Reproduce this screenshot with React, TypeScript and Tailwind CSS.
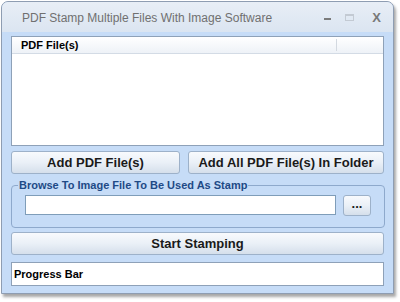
import { useState } from 'react';

const btn =
  'rounded-[3px] border border-[#9db1c9] bg-gradient-to-b from-[#f8fafd] via-[#eaf0f7] to-[#d5dfeb] text-[13px] font-bold text-[#1a1a1a] flex items-center justify-center';

export default function App() {
  const [imagePath, setImagePath] = useState('');

  return (
    <div className="w-[400px] h-[302px] bg-white pt-[1px] pl-[1px]" style={{ fontFamily: '"Liberation Sans", Arial, sans-serif' }}>
      <div className="w-[393px] h-[293px] rounded-t-[7px] border border-[#8e9db2] bg-[#c6dcf7] shadow-[2px_3px_3px_rgba(0,0,0,0.35)] flex flex-col overflow-hidden">
        {/* title bar */}
        <div className="h-[30px] shrink-0 flex items-center bg-gradient-to-b from-[#e8eef6] to-[#dbe5f1] pl-[20px] pr-[12px]">
          <span className="text-[12px] text-[#707070] flex-1 pt-[1px]">PDF Stamp Multiple Files With Image Software</span>
          <div className="flex items-center gap-[10px] text-[#7b7b7b]">
            <span className="w-[7px] h-[2px] bg-[#7b7b7b] mt-[4px]" />
            <span className="w-[9px] h-[7px] border border-[#c3cad3] border-t-2 ml-[4px]" />
            <span className="text-[13px] font-bold text-[#787878] ml-[8px] leading-none">X</span>
          </div>
        </div>

        {/* client area */}
        <div className="flex-1 flex flex-col px-[9px] pt-[4px]">
          <div className="h-[110px] bg-white border border-[#8ea1b8] flex flex-col">
            <div className="h-[17px] flex items-center bg-gradient-to-b from-white to-[#eef2f7] border-b border-[#d3dbe5]">
              <span className="text-[11px] font-bold text-black pl-[9px] w-[324px]">PDF File(s)</span>
              <span className="w-px h-[12px] bg-[#d3d9e0]" />
            </div>
          </div>

          <div className="flex gap-[8px] mt-[5px]">
            <button className={`${btn} w-[169px] h-[23px]`}>Add PDF File(s)</button>
            <button className={`${btn} flex-1 h-[23px]`}>Add All PDF File(s) In Folder</button>
          </div>

          <fieldset className="mt-[3px] h-[51px] border border-[#8ea9cc] rounded-[4px] px-[13px] pb-0 pt-0 flex items-start">
            <legend className="text-[11px] font-bold text-[#1e4a86] px-[1px] ml-[-7px]">
              Browse To Image File To Be Used As Stamp
            </legend>
            <div className="flex items-center gap-[7px] mt-[1px] w-full">
              <input
                value={imagePath}
                onChange={(e) => setImagePath(e.target.value)}
                className="w-[311px] h-[20px] bg-white border border-[#7f9db9] outline-none text-[11px] px-1"
              />
              <button className={`${btn} w-[28px] h-[21px] text-[11px] leading-none pb-[4px]`}>...</button>
            </div>
          </fieldset>

          <button className={`${btn} h-[23px] mt-[4px]`}>Start Stamping</button>

          <div className="h-[24px] mt-[7px] bg-white border border-[#8ea1b8] flex items-center">
            <span className="text-[11px] font-bold text-black pl-[2px]">Progress Bar</span>
          </div>
        </div>
      </div>
    </div>
  );
}
